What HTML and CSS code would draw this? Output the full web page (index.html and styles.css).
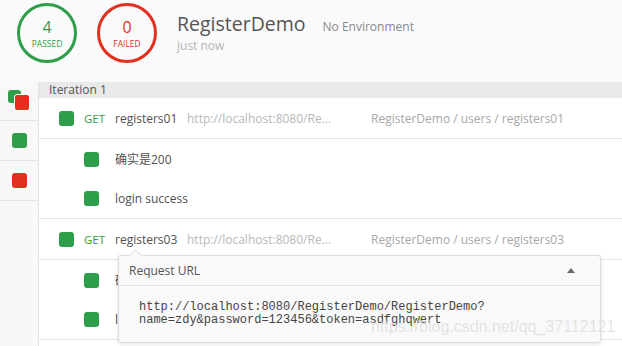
FILE: index.html
```html
<!DOCTYPE html>
<html lang="en">
<head>
    <meta charset="UTF-8">
    <meta name="viewport" content="width=device-width, initial-scale=1.0">
    <title>RegisterDemo - Run Results</title>
    <link rel="stylesheet" href="styles.css">
</head>
<body>
    <header class="summary">
        <div class="stat passed">
            <span class="stat-count">4</span>
            <span class="stat-label">PASSED</span>
        </div>
        <div class="stat failed">
            <span class="stat-count">0</span>
            <span class="stat-label">FAILED</span>
        </div>
        <div class="run-info">
            <div class="run-title">
                <span class="run-name">RegisterDemo</span>
                <span class="run-env">No Environment</span>
            </div>
            <div class="run-time">just now</div>
        </div>
    </header>

    <div class="results">
        <aside class="iterations">
            <div class="iter-cell">
                <span class="stack">
                    <span class="dot pass"></span>
                    <span class="dot fail"></span>
                </span>
            </div>
            <div class="iter-cell"><span class="dot pass"></span></div>
            <div class="iter-cell"><span class="dot fail"></span></div>
        </aside>

        <main class="runs">
            <div class="iteration-bar">Iteration 1</div>

            <div class="request">
                <div class="request-row">
                    <span class="dot pass"></span>
                    <span class="method">GET</span>
                    <span class="req-name">registers01</span>
                    <span class="req-url">http://localhost:8080/Re...</span>
                    <span class="req-path">RegisterDemo / users / registers01</span>
                </div>
                <div class="test-row"><span class="dot pass"></span><span class="test-name">确实是200</span></div>
                <div class="test-row"><span class="dot pass"></span><span class="test-name">login success</span></div>
            </div>

            <div class="request">
                <div class="request-row has-popup">
                    <span class="dot pass"></span>
                    <span class="method">GET</span>
                    <span class="req-name">registers03</span>
                    <span class="req-url">http://localhost:8080/Re...</span>
                    <span class="req-path">RegisterDemo / users / registers03</span>

                    <div class="url-popup">
                        <div class="popup-head">
                            Request URL
                            <span class="popup-caret"></span>
                        </div>
                        <div class="popup-body">http://localhost:8080/RegisterDemo/RegisterDemo?<br>name=zdy&amp;password=123456&amp;token=asdfghqwert</div>
                    </div>
                </div>
                <div class="test-row"><span class="dot pass"></span><span class="test-name">确实是200</span></div>
                <div class="test-row"><span class="dot pass"></span><span class="test-name">login success</span></div>
            </div>
        </main>
    </div>

    <div class="watermark">https://blog.csdn.net/qq_37112121</div>
</body>
</html>
```

FILE: styles.css
```css
/* Global */
body {
    margin: 0;
    height: 346px;
    overflow: hidden;
    background-color: #ffffff;
    color: #505050;
    font-family: "Open Sans", "Noto Sans CJK SC", sans-serif;
    position: relative;
}

/* Summary header */
.summary {
    display: flex;
    align-items: flex-start;
    gap: 20px;
    height: 82px;
    padding: 3px 0 0 17px;
    box-sizing: border-box;
    background-color: #fafafa;
}

.stat {
    width: 60px;
    height: 60px;
    border: 3px solid;
    border-radius: 50%;
    box-sizing: border-box;
    display: flex;
    flex-direction: column;
    align-items: center;
    justify-content: center;
}

.stat.passed {
    border-color: #2f9e4b;
    color: #2f9e4b;
}

.stat.failed {
    border-color: #e2301f;
    color: #e2301f;
}

.stat-count {
    font-size: 16px;
    line-height: 18px;
    margin-top: 2px;
}

.stat-label {
    font-size: 8.5px;
    line-height: 12px;
    margin-top: 2px;
}

.run-info {
    padding-top: 8px;
}

.run-title {
    display: flex;
    align-items: baseline;
    gap: 17px;
}

.run-name {
    font-size: 19.5px;
    line-height: 26px;
    color: #555555;
}

.run-env {
    font-size: 12px;
    color: #888888;
}

.run-time {
    font-size: 12px;
    line-height: 16px;
    margin-top: 1px;
    color: #b5b5b5;
}

/* Results */
.results {
    display: flex;
}

.iterations {
    width: 38px;
    height: 264px;
    background-color: #f8f8f8;
    border-right: 1px solid #e4e4e4;
}

.iter-cell {
    height: 39px;
    border-bottom: 1px solid #e4e4e4;
    display: flex;
    justify-content: center;
    align-items: center;
}

.iter-cell:first-child {
    height: 38px;
}

.stack {
    position: relative;
    width: 22px;
    height: 22px;
    margin-left: -1px;
}

.stack .dot {
    position: absolute;
}

.stack .dot.pass {
    top: 0;
    left: 0;
    width: 13px;
    height: 13px;
}

.stack .dot.fail {
    top: 4px;
    left: 6px;
    width: 14px;
    height: 15px;
    border: 1px solid #ffffff;
}

.dot {
    display: inline-block;
    width: 15px;
    height: 15px;
    border-radius: 3px;
    flex-shrink: 0;
}

.dot.pass {
    background-color: #2f9e4b;
}

.dot.fail {
    background-color: #e2301f;
}

.runs {
    flex: 1;
}

.iteration-bar {
    height: 16px;
    line-height: 16px;
    padding-left: 10px;
    background-color: #e9e9e9;
    font-size: 12px;
    color: #555555;
}

.request {
    border-bottom: 1px solid #e6e6e6;
}

.request-row {
    display: flex;
    align-items: center;
    height: 40px;
    padding-left: 20px;
    border-bottom: 1px solid #e6e6e6;
    font-size: 12px;
    white-space: nowrap;
}

.method {
    margin-left: 10px;
    width: 31px;
    font-size: 11.5px;
    color: #2f9e4b;
}

.req-name {
    width: 72px;
    color: #505050;
}

.req-url {
    width: 184px;
    color: #b8b8b8;
}

.req-path {
    color: #a8a8a8;
}

.test-row {
    display: flex;
    align-items: center;
    height: 40px;
    padding-left: 45px;
    font-size: 12px;
}

.test-row:last-child {
    height: 39px;
}

.test-name {
    margin-left: 16px;
    color: #505050;
}

/* Request URL tooltip */
.has-popup {
    position: relative;
}

.url-popup {
    position: absolute;
    top: 36px;
    left: 79px;
    width: 481px;
    background-color: #f9f9f9;
    border: 1px solid #dedede;
    border-radius: 3px;
    box-shadow: 0 1px 4px rgba(0, 0, 0, 0.12);
    z-index: 2;
}

.url-popup::before {
    content: "";
    position: absolute;
    top: -5px;
    left: 12px;
    width: 8px;
    height: 8px;
    background-color: #f9f9f9;
    border-left: 1px solid #e2e2e2;
    border-top: 1px solid #e2e2e2;
    transform: rotate(45deg);
}

.popup-head {
    position: relative;
    height: 29px;
    line-height: 29px;
    padding-left: 10px;
    border-bottom: 1px solid #e3e3e3;
    font-size: 12px;
    color: #555555;
}

.popup-caret {
    position: absolute;
    right: 25px;
    top: 12px;
    width: 0;
    height: 0;
    border-left: 4px solid transparent;
    border-right: 4px solid transparent;
    border-bottom: 5px solid #6a6a6a;
}

.popup-body {
    height: 56px;
    padding: 15px 0 0 20px;
    box-sizing: border-box;
    font-family: "Liberation Mono", monospace;
    font-size: 12px;
    line-height: 13px;
    color: #444444;
}

/* Watermark */
.watermark {
    position: absolute;
    left: 371px;
    top: 318px;
    font-family: "Liberation Sans", Arial, sans-serif;
    font-size: 16px;
    color: rgba(220, 220, 220, 0.75);
    pointer-events: none;
    z-index: 3;
}
```
